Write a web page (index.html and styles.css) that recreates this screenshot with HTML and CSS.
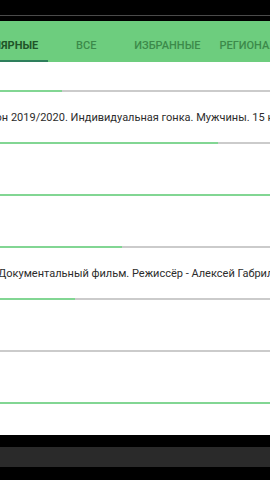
FILE: index.html
```html
<!DOCTYPE html>
<html lang="ru">
<head>
  <meta charset="UTF-8" />
  <meta name="viewport" content="width=device-width, initial-scale=1" />
  <title>Трансляции</title>
  <link rel="stylesheet" href="styles.css">
</head>
<body>

  <div class="statusbar"></div>

  <div class="tabs">
    <div class="tab active">Популярные</div>
    <div class="tab">Все</div>
    <div class="tab">Избранные</div>
    <div class="tab">Региональные</div>
  </div>

  <div class="list">
    <div class="item first"></div>
    <div class="item">
      <div class="bar"><span style="width: 62px"></span></div>
      <div class="title shift-a">Сезон 2019/2020. Индивидуальная гонка. Мужчины. 15 км</div>
    </div>
    <div class="item">
      <div class="bar"><span style="width: 218px"></span></div>
    </div>
    <div class="item">
      <div class="bar"><span style="width: 100%"></span></div>
    </div>
    <div class="item">
      <div class="bar"><span style="width: 122px"></span></div>
      <div class="title shift-b">Документальный фильм. Режиссёр - Алексей Габрилович</div>
    </div>
    <div class="item">
      <div class="bar"><span style="width: 75px"></span></div>
    </div>
    <div class="item">
      <div class="bar"><span style="width: 0"></span></div>
    </div>
    <div class="item">
      <div class="bar"><span style="width: 100%"></span></div>
    </div>
  </div>

  <div class="navbar">
    <div class="navbar-strip"></div>
  </div>

</body>
</html>
```

FILE: styles.css
```css
body {
  margin: 0;
  height: 480px;
  overflow: hidden;
  background: #000;
  display: flex;
  flex-direction: column;
  font-family: Roboto, "Noto Sans", sans-serif;
}

.statusbar {
  height: 15px;
  border-bottom: 1px solid #4a4a4a;
  margin-bottom: 5px;
}

.tabs {
  height: 41px;
  background: #6dcd7e;
  display: flex;
  margin-left: -46px;
  flex-shrink: 0;
  overflow: hidden;
}

.tab {
  position: relative;
  flex-shrink: 0;
  min-width: 77px;
  padding: 7px 9.5px 0;
  box-sizing: border-box;
  display: flex;
  align-items: center;
  justify-content: center;
  font-size: 11px;
  font-weight: 500;
  text-transform: uppercase;
  color: #3c8a4a;
  white-space: nowrap;
}

.tab.active {
  color: #1f5529;
  font-weight: 700;
}

.tab.active::after {
  content: "";
  position: absolute;
  left: 0;
  right: 0;
  bottom: 0;
  height: 2px;
  background: #2e7f5c;
}

.list {
  flex: 1;
  background: #fff;
  overflow: hidden;
}

.item {
  height: 52px;
  display: flex;
  flex-direction: column;
}

.item.first {
  height: 28px;
}

.bar {
  height: 2px;
  background: #cbcbcb;
  flex-shrink: 0;
}

.bar span {
  display: block;
  height: 100%;
  background: #82d693;
}

.title {
  flex: 1;
  display: flex;
  align-items: center;
  font-size: 11px;
  color: #2c2c2c;
  white-space: nowrap;
}

.shift-a {
  margin-left: -23px;
}

.shift-b {
  margin-left: -2px;
}

.navbar {
  height: 45px;
  flex-shrink: 0;
  padding-top: 12px;
  box-sizing: border-box;
}

.navbar-strip {
  height: 20px;
  background: #2a2a2a;
}
```
